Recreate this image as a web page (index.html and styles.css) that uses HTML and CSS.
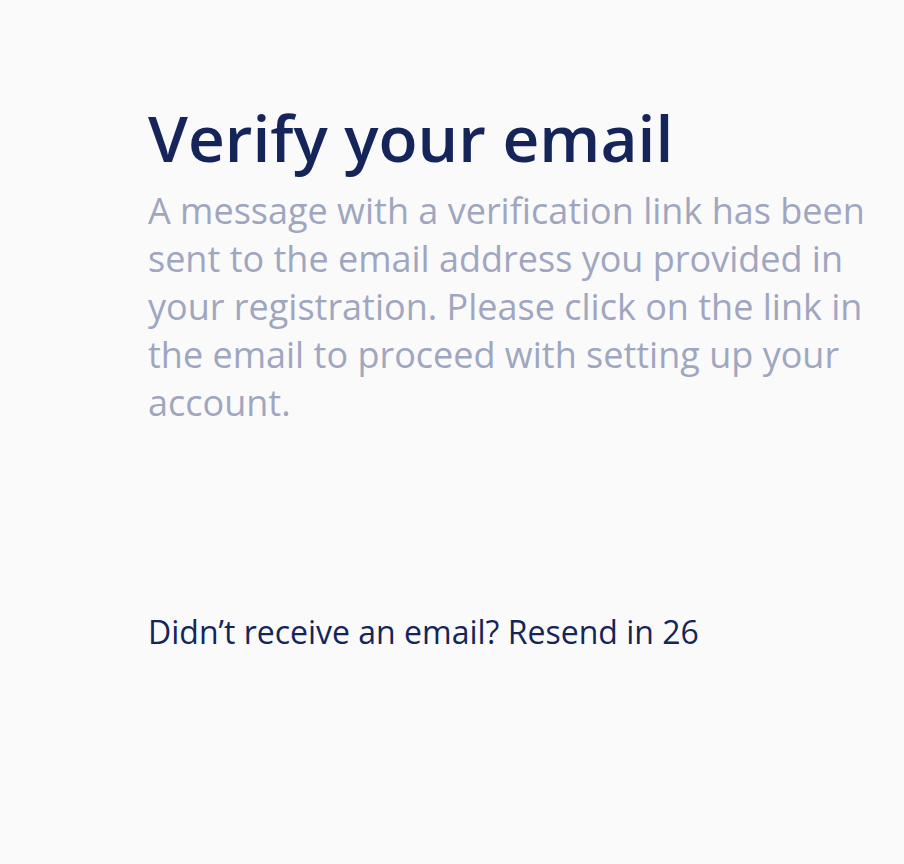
FILE: index.html
```html
<!DOCTYPE html>
<html lang="en">

<head>
    <meta charset="UTF-8">
    <meta name="viewport" content="width=device-width, initial-scale=1.0">
    <title>Verify your email</title>
    <link rel="stylesheet" href="styles.css">
</head>

<body>
    <div class="container">
        <h1>Verify your email</h1>
        <p class="message">A message with a verification link has been sent to the email address you provided in your registration. Please click on the link in the email to proceed with setting up your account.</p>
        <p class="resend">Didn’t receive an email? Resend in <span id="countdown">26</span></p>
    </div>
</body>

</html>
```
FILE: styles.css
```css
body {
    margin: 0;
    font-family: "Open Sans", "Noto Sans", sans-serif;
    background-color: #fafafb;
    color: #15255a;
}

.container {
    padding: 102px 0 0 148px;
    width: 730px;
}

h1 {
    margin: 0;
    font-size: 64px;
    font-weight: 600;
    line-height: 72px;
    color: #15255a;
}

.message {
    margin: 13px 0 0;
    font-size: 36px;
    line-height: 48px;
    color: #a0a6be;
}

.resend {
    margin: 185px 0 0;
    font-size: 32px;
    line-height: 40px;
    color: #15255a;
}
```
